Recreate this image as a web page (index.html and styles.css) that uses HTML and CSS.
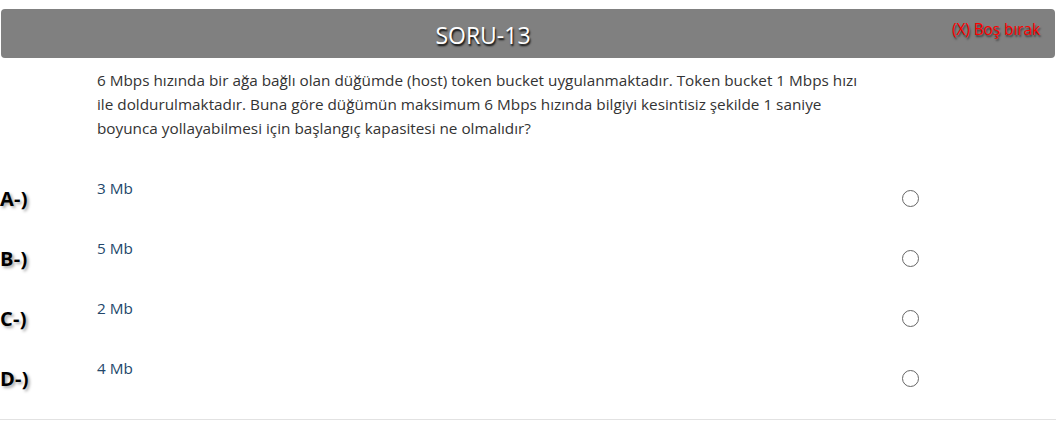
FILE: index.html
```html
<!DOCTYPE html>
<html lang="tr">
<head>
<meta charset="utf-8">
<title>SORU-13</title>
<link rel="stylesheet" href="styles.css">
</head>
<body>
<div class="page">
  <div class="header">
    <div class="title">SORU-13</div>
    <a class="skip">(X) Boş bırak</a>
  </div>
  <div class="question">6 Mbps hızında bir ağa bağlı olan düğümde (host) token bucket uygulanmaktadır. Token bucket 1 Mbps hızı ile doldurulmaktadır. Buna göre düğümün maksimum 6 Mbps hızında bilgiyi kesintisiz şekilde 1 saniye boyunca yollayabilmesi için başlangıç kapasitesi ne olmalıdır?</div>
  <div class="options">
    <div class="option">
      <div class="label">A-)</div>
      <div class="answer">3 Mb</div>
      <span class="radio"></span>
    </div>
    <div class="option">
      <div class="label">B-)</div>
      <div class="answer">5 Mb</div>
      <span class="radio"></span>
    </div>
    <div class="option">
      <div class="label">C-)</div>
      <div class="answer">2 Mb</div>
      <span class="radio"></span>
    </div>
    <div class="option">
      <div class="label">D-)</div>
      <div class="answer">4 Mb</div>
      <span class="radio"></span>
    </div>
  </div>
  <div class="rule"></div>
</div>
</body>
</html>
```
FILE: styles.css
```css
html, body {
  margin: 0;
  padding: 0;
  background: #fff;
}
body {
  font-family: "Open Sans", "Noto Sans", "DejaVu Sans", sans-serif;
  color: #333;
}
.page {
  width: 1056px;
}
.header {
  position: relative;
  margin: 9px 1px 0 1px;
  height: 49px;
  background: #808080;
  border-radius: 4px;
  display: flex;
  align-items: center;
}
.title {
  flex: 1;
  text-align: center;
  padding-right: 90px;
  color: #fff;
  font-size: 23px;
  text-shadow: 1px 2px 2px #000;
  padding-top: 2px;
}
.skip {
  position: absolute;
  right: 15px;
  top: 9px;
  color: #ff0000;
  font-size: 15.5px;
  letter-spacing: -0.1px;
  text-shadow: 1px 2px 2px rgba(0,0,0,0.6);
}
.question {
  margin: 10px 0 0 97px;
  width: 775px;
  font-size: 15.3px;
  line-height: 24px;
  color: #333;
}
.options {
  margin-top: 28px;
  display: flex;
  flex-direction: column;
}
.option {
  display: grid;
  grid-template-columns: 97px 805px 17px 1fr;
  height: 60px;
  align-items: center;
}
.label {
  font-weight: bold;
  font-size: 20px;
  letter-spacing: 0.3px;
  color: #000;
  text-shadow: 2px 2px 3px rgba(0,0,0,0.35);
}
.answer {
  align-self: start;
  padding-top: 10px;
  font-size: 15.3px;
  color: #23476b;
}
.radio {
  width: 17px;
  height: 17px;
  box-sizing: border-box;
  border: 1.5px solid #666;
  border-radius: 50%;
}
.rule {
  margin-top: 11px;
  height: 1px;
  background: #e2e2e2;
}
```
